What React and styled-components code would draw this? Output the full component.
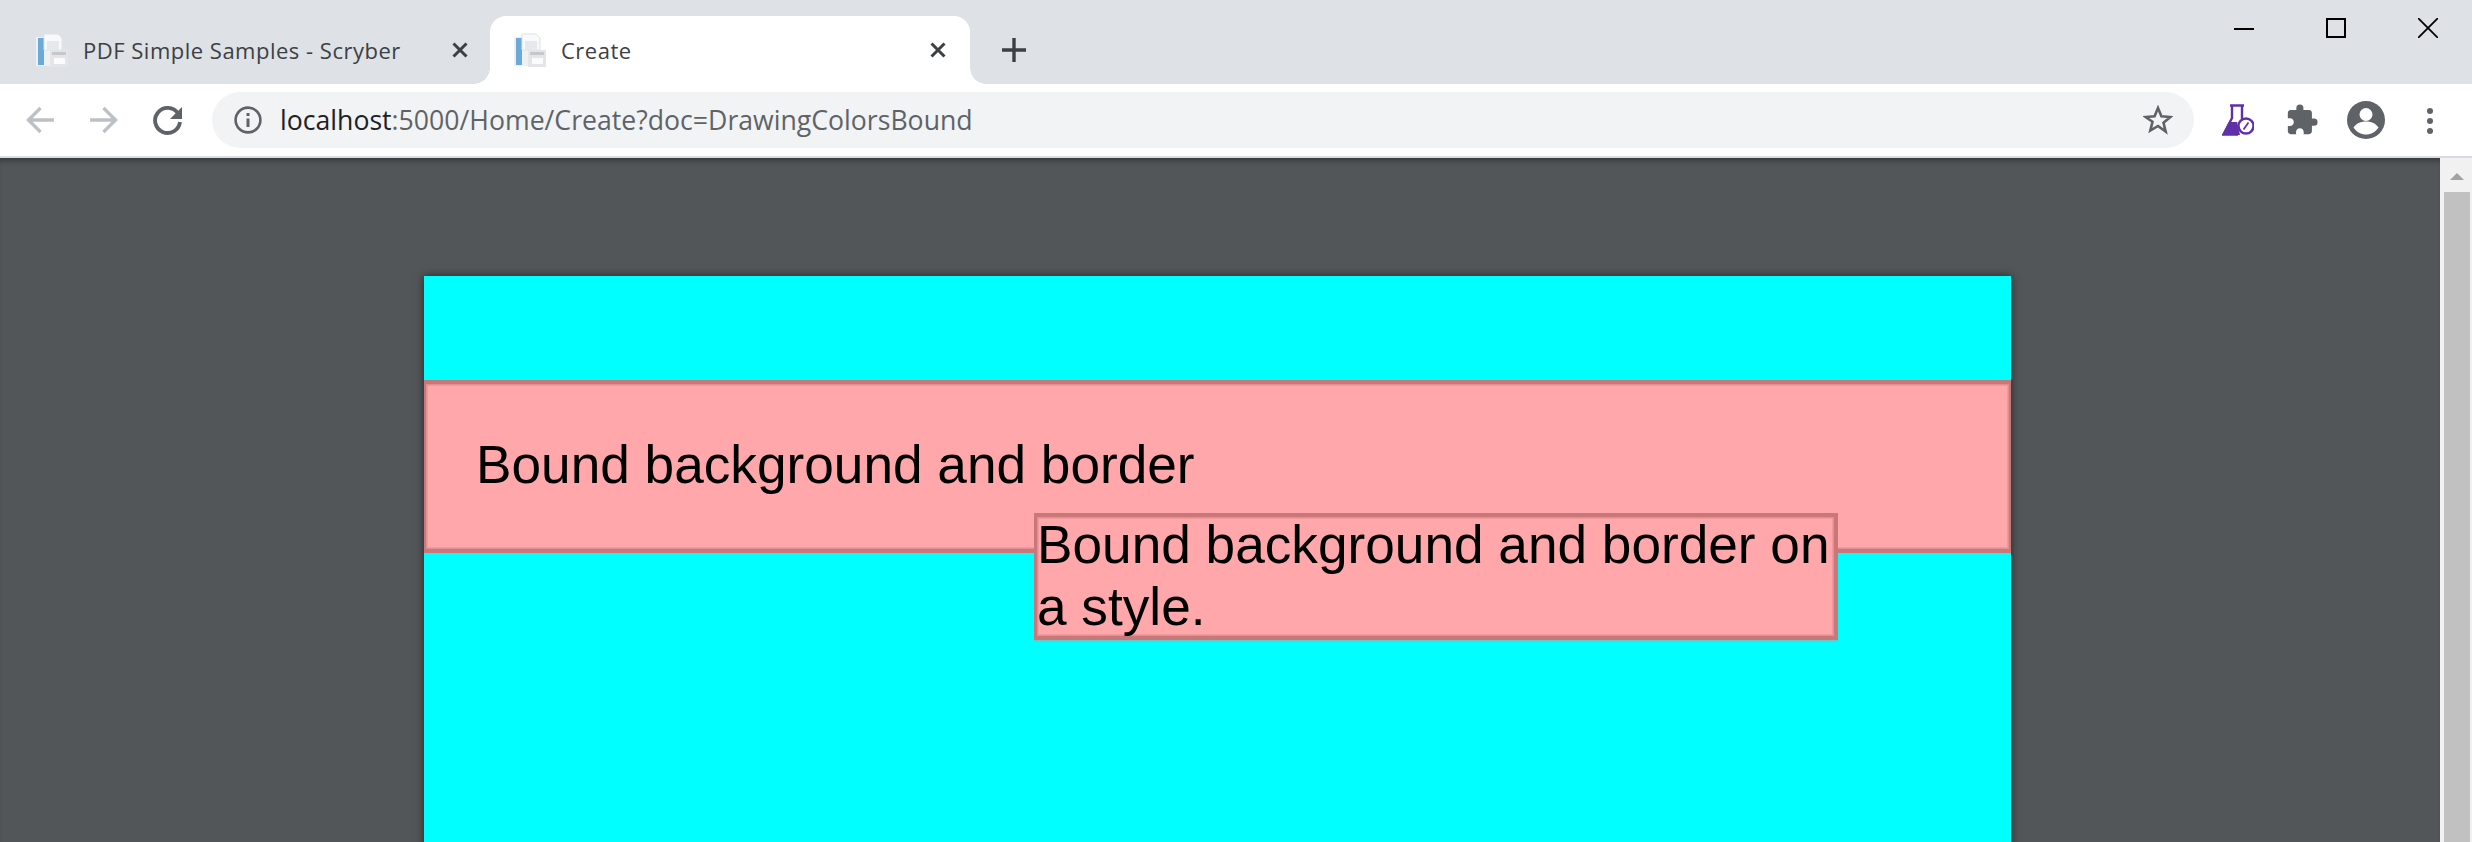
import styled, { createGlobalStyle } from "styled-components";

const GlobalStyle = createGlobalStyle`
  html, body {
    margin: 0;
    padding: 0;
    height: 100%;
    overflow: hidden;
    background: #525659;
  }
  #root {
    height: 100%;
  }
`;

const tabs = [
  { title: "PDF Simple Samples - Scryber", active: false },
  { title: "Create", active: true },
];

const Window = styled.div`
  display: flex;
  flex-direction: column;
  width: 2472px;
  height: 842px;
  overflow: hidden;
  font-family: "Open Sans", "Noto Sans", sans-serif;
`;

const TabStrip = styled.div`
  display: flex;
  align-items: flex-end;
  flex: 0 0 84px;
  height: 84px;
  padding-left: 16px;
  background: #dee1e6;
`;

const Tab = styled.div`
  position: relative;
  display: flex;
  align-items: center;
  width: ${(p) => (p.$active ? "480px" : "474px")};
  height: 68px;
  padding: ${(p) => (p.$active ? "0 24px" : "0 22px 0 20px")};
  box-sizing: border-box;
  background: ${(p) => (p.$active ? "#ffffff" : "transparent")};
  border-radius: 16px 16px 0 0;
  color: #3c4043;

  ${(p) =>
    p.$active &&
    `
    &::before, &::after {
      content: "";
      position: absolute;
      bottom: 0;
      width: 16px;
      height: 16px;
    }
    &::before {
      left: -16px;
      background: radial-gradient(circle at 0 0, transparent 15.5px, #ffffff 16px);
    }
    &::after {
      right: -16px;
      background: radial-gradient(circle at 100% 0, transparent 15.5px, #ffffff 16px);
    }
  `}
`;

const TabTitle = styled.span`
  flex: 1;
  margin-left: 15px;
  font-size: 22px;
  letter-spacing: 0.5px;
  white-space: nowrap;
`;

const NewTab = styled.div`
  display: flex;
  align-items: center;
  justify-content: center;
  width: 56px;
  height: 68px;
  margin-left: 16px;
`;

const WindowControls = styled.div`
  display: flex;
  margin-left: auto;
  margin-right: -2px;
  align-self: flex-start;
`;

const WindowButton = styled.div`
  display: flex;
  align-items: center;
  justify-content: center;
  width: 92px;
  height: 56px;
`;

const Toolbar = styled.div`
  display: flex;
  align-items: center;
  flex: 0 0 72px;
  height: 72px;
  padding-left: 16px;
  background: #ffffff;
  border-bottom: 2px solid #dadce0;
`;

const NavButton = styled.div`
  display: flex;
  align-items: center;
  justify-content: center;
  width: 48px;
  height: 48px;
  margin-right: 16px;
`;

const Omnibox = styled.div`
  display: flex;
  align-items: center;
  flex: 0 0 1982px;
  height: 56px;
  margin-left: 4px;
  padding: 0 21px 0 22px;
  box-sizing: border-box;
  background: #f1f3f4;
  border-radius: 28px;
`;

const UrlText = styled.div`
  flex: 1;
  margin-left: 18px;
  font-size: 26.65px;
  color: #5f6368;
  white-space: nowrap;

  b {
    font-weight: 400;
    color: #202124;
  }
`;

const ToolIcons = styled.div`
  display: flex;
  align-items: center;
  margin-left: 12px;
`;

const ToolButton = styled.div`
  display: flex;
  align-items: center;
  justify-content: center;
  width: 64px;
  height: 48px;
`;

const Viewer = styled.div`
  display: flex;
  flex: 1;
  min-height: 0;
  background: #525659;
`;

const PageArea = styled.div`
  flex: 1;
  padding: 118px 0 0 424px;
  overflow: hidden;
  box-shadow: inset 0 6px 6px -4px rgba(0, 0, 0, 0.4);
`;

const Sheet = styled.div`
  position: relative;
  width: 1587px;
  height: 900px;
  padding-top: 104px;
  box-sizing: border-box;
  background: #00ffff;
  box-shadow: 0 0 8px rgba(0, 0, 0, 0.55);
  font-family: "Liberation Sans", Arial, sans-serif;
  color: #000000;
`;

const Band = styled.div`
  height: 173px;
  padding: 49px 0 0 50px;
  box-sizing: border-box;
  background: #ffa7aa;
  border: 4px solid #c97779;
  border-left-width: 2px;
  border-right-width: 2px;
  box-shadow: inset 0 0 0 1.5px #e08f92, 0 1px 0 #6fd0d2;
  font-size: 53.2px;
  line-height: 64px;
`;

const StyledNote = styled.div`
  position: absolute;
  left: 610px;
  top: 237px;
  width: 804px;
  height: 127px;
  box-sizing: border-box;
  background: #ffa7aa;
  border: 4px solid #c97779;
  border-left-width: 3px;
  box-shadow: inset 0 0 0 1.5px #e08f92, 0 2px 0 #6fc6c8;
  font-size: 53.2px;
  line-height: 62px;
`;

const NoteText = styled.div`
  margin-top: -3px;
`;

const Scrollbar = styled.div`
  display: flex;
  flex-direction: column;
  align-items: center;
  flex: 0 0 32px;
  padding-left: 2px;
  box-sizing: border-box;
  background: #f1f1f1;
`;

const ScrollArrow = styled.div`
  width: 0;
  height: 0;
  margin: 15px 0 12px;
  border-left: 7px solid transparent;
  border-right: 7px solid transparent;
  border-bottom: 7px solid #a3a3a3;
`;

const ScrollThumb = styled.div`
  width: 26px;
  flex: 1;
  background: #c1c1c1;
`;

const PdfIcon = () => (
  <svg width="32" height="34" viewBox="0 0 32 34">
    <rect x="0" y="4" width="24" height="29" fill="#eef0f2" />
    <rect x="2" y="5" width="6" height="27" fill="#6baad8" />
    <path d="M8 1h14l4 4v12H8z" fill="#f8f9fa" stroke="#dfe1e4" />
    <rect x="11" y="8" width="12" height="9" fill="#e6e8eb" />
    <rect x="14" y="17" width="18" height="17" fill="#e3e5e8" />
    <rect x="16" y="19" width="14" height="3" fill="#c4c7cb" />
    <rect x="18" y="25" width="11" height="6" fill="#fbfbfc" />
  </svg>
);

const CloseIcon = () => (
  <svg width="16" height="16" viewBox="0 0 16 16">
    <path d="M1.500 1.500l13 13M14.500 1.500l-13 13" stroke="#3c4043" strokeWidth="3" />
  </svg>
);

const App = () => {
  return (
    <Window>
      <GlobalStyle />
      <TabStrip>
        {tabs.map((tab) => (
          <Tab key={tab.title} $active={tab.active}>
            <PdfIcon />
            <TabTitle>{tab.title}</TabTitle>
            <CloseIcon />
          </Tab>
        ))}
        <NewTab>
          <svg width="24" height="24" viewBox="0 0 24 24">
            <path d="M12 0v24M0 12h24" stroke="#3c4043" strokeWidth="3.4" />
          </svg>
        </NewTab>
        <WindowControls>
          <WindowButton>
            <svg width="20" height="20" viewBox="0 0 20 20">
              <path d="M0 11h20" stroke="#000" strokeWidth="2" />
            </svg>
          </WindowButton>
          <WindowButton>
            <svg width="20" height="20" viewBox="0 0 20 20">
              <rect x="1" y="1" width="18" height="18" fill="none" stroke="#000" strokeWidth="2" />
            </svg>
          </WindowButton>
          <WindowButton>
            <svg width="20" height="20" viewBox="0 0 20 20">
              <path d="M0 0l20 20M20 0L0 20" stroke="#000" strokeWidth="1.8" />
            </svg>
          </WindowButton>
        </WindowControls>
      </TabStrip>
      <Toolbar>
        <NavButton>
          <svg width="30" height="30" viewBox="0 0 30 30">
            <path d="M29 15H4M15.500 3L3.500 15l12 12" fill="none" stroke="#bdc1c6" strokeWidth="3.400" />
          </svg>
        </NavButton>
        <NavButton>
          <svg width="30" height="30" viewBox="0 0 30 30">
            <path d="M1 15h25M14.500 3l12 12-12 12" fill="none" stroke="#bdc1c6" strokeWidth="3.400" />
          </svg>
        </NavButton>
        <NavButton>
          <svg width="32" height="32" viewBox="0 0 32 32">
            <path d="M26 9.500A12.500 12.500 0 1 0 28 18" fill="none" stroke="#5f6368" strokeWidth="3.800" />
            <path d="M30 3v12H18z" fill="#5f6368" />
          </svg>
        </NavButton>
        <Omnibox>
          <svg width="28" height="28" viewBox="0 0 28 28">
            <circle cx="14" cy="14" r="12.400" fill="none" stroke="#5f6368" strokeWidth="2.600" />
            <path d="M14 12.500V21M14 7v3" stroke="#5f6368" strokeWidth="3" />
          </svg>
          <UrlText>
            <b>localhost</b>:5000/Home/Create?doc=DrawingColorsBound
          </UrlText>
          <svg width="30" height="30" viewBox="0 0 30 30">
            <path
              d="M15 3l3.400 8.300 9 .7-6.900 5.800 2.200 8.800L15 21l-7.700 4.600 2.200-8.800L2.600 12l9-.7z"
              fill="none"
              stroke="#5f6368"
              strokeWidth="2.600"
            />
          </svg>
        </Omnibox>
        <ToolIcons>
          <ToolButton>
            <svg width="32" height="32" viewBox="0 0 32 32">
              <path d="M8 1.500h14M10 2v12L1.500 30.500H16M20 2v13" fill="none" stroke="#6030a8" strokeWidth="2.400" />
              <path d="M7 18h8l3 13H0z" fill="#6030a8" />
              <circle cx="24" cy="22" r="7.500" fill="#fff" stroke="#6030a8" strokeWidth="2.400" />
              <path d="M21.500 25.500l5-7" stroke="#6030a8" strokeWidth="1.800" />
            </svg>
          </ToolButton>
          <ToolButton>
            <svg width="34" height="34" viewBox="0 0 24 24" fill="#5f6368">
              <path d="M20.500 11H19V7c0-1.100-.9-2-2-2h-4V3.500a2.500 2.500 0 0 0-5 0V5H4c-1.100 0-2 .9-2 2v3.800h1.500c1.500 0 2.700 1.200 2.700 2.700s-1.200 2.700-2.700 2.700H2V20c0 1.100.9 2 2 2h3.800v-1.500c0-1.500 1.200-2.700 2.700-2.700s2.700 1.200 2.700 2.700V22H17c1.100 0 2-.9 2-2v-4h1.500a2.500 2.500 0 0 0 0-5z" />
            </svg>
          </ToolButton>
          <ToolButton>
            <svg width="40" height="40" viewBox="0 0 40 40">
              <circle cx="20" cy="20" r="19" fill="#5f6368" />
              <circle cx="20" cy="14.500" r="6.500" fill="#fff" />
              <path d="M7.500 27.500c3-4.500 8-6 12.500-6s9.500 1.500 12.500 6C29.500 32 25 34.500 20 34.500S10.500 32 7.500 27.500z" fill="#fff" />
            </svg>
          </ToolButton>
          <ToolButton>
            <svg width="36" height="32" viewBox="0 0 36 32" fill="#5f6368">
              <circle cx="18" cy="7" r="3" />
              <circle cx="18" cy="17" r="3" />
              <circle cx="18" cy="27" r="3" />
            </svg>
          </ToolButton>
        </ToolIcons>
      </Toolbar>
      <Viewer>
        <PageArea>
          <Sheet>
            <Band>Bound background and border</Band>
            <StyledNote>
              <NoteText>Bound background and border on a style.</NoteText>
            </StyledNote>
          </Sheet>
        </PageArea>
        <Scrollbar>
          <ScrollArrow />
          <ScrollThumb />
        </Scrollbar>
      </Viewer>
    </Window>
  );
};

export default App;
